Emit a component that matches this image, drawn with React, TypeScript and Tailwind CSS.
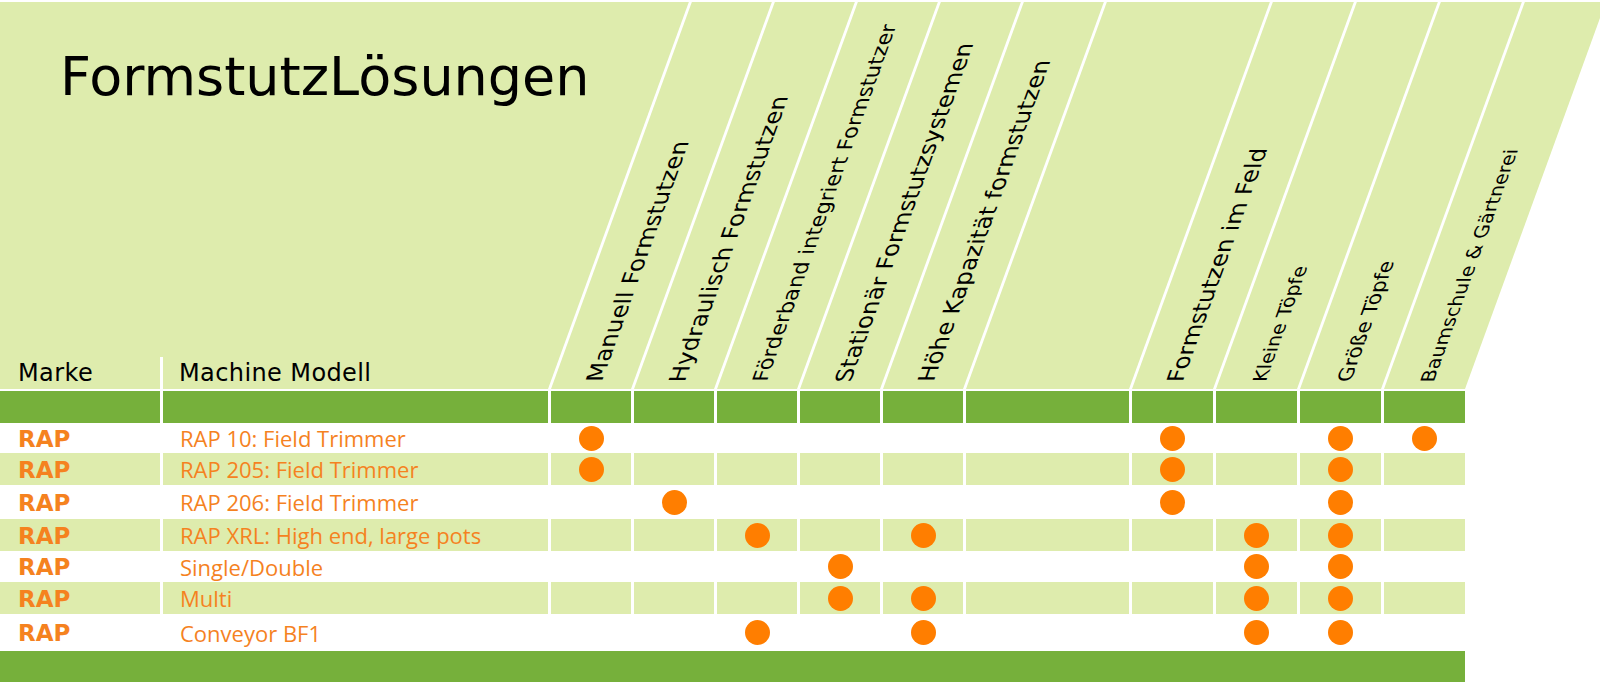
const LIGHT = 'bg-[#deecad]'

type Col = { label: string; size: string }

const columns: Col[] = [
  { label: 'Manuell Formstutzen', size: 'text-[23px]' },
  { label: 'Hydraulisch Formstutzen', size: 'text-[23px]' },
  { label: 'Förderband integriert Formstutzer', size: 'text-[21px]' },
  { label: 'Stationär Formstutzsystemen', size: 'text-[23px]' },
  { label: 'Höhe Kapazität formstutzen', size: 'text-[23px]' },
  { label: '', size: 'text-[23px]' },
  { label: 'Formstutzen im Feld', size: 'text-[23px]' },
  { label: 'Kleine Töpfe', size: 'text-[19px]' },
  { label: 'Größe Töpfe', size: 'text-[20px]' },
  { label: 'Baumschule & Gärtnerei', size: 'text-[19px]' },
]

const rows = [
  { model: 'RAP 10: Field Trimmer', dots: [0, 6, 8, 9], h: 'h-[30px]' },
  { model: 'RAP 205: Field Trimmer', dots: [0, 6, 8], h: 'h-[32px]' },
  { model: 'RAP 206: Field Trimmer', dots: [1, 6, 8], h: 'h-[34px]' },
  { model: 'RAP XRL: High end, large pots', dots: [2, 4, 7, 8], h: 'h-[32px]' },
  { model: 'Single/Double', dots: [3, 7, 8], h: 'h-[31px]' },
  { model: 'Multi', dots: [3, 4, 7, 8], h: 'h-[32px]' },
  { model: 'Conveyor BF1', dots: [2, 4, 7, 8], h: 'h-[37px]' },
]

const tableCols =
  'grid grid-cols-[160px_385px_80px_80px_80px_80px_80px_163px_81px_81px_81px_81px] gap-x-[3px]'

function Dot() {
  return <span className="block h-[25px] w-[25px] rounded-full bg-[#ff7e00]" />
}

export default function App() {
  return (
    <div className="h-[682px] w-[1600px] overflow-hidden bg-white [font-family:'DejaVu_Sans',sans-serif]">
      {/* Header with slanted column titles */}
      <div className={`mt-[2px] flex h-[387px] w-[1465px] ${LIGHT}`}>
        <div className="flex w-[548px] shrink-0 flex-col justify-between">
          <h1 className="pl-[60px] pt-[48px] text-[54px] leading-[54px] font-normal text-black">
            FormstutzLösungen
          </h1>
          <div className="flex h-[32px] text-[24px] leading-[24px] tracking-[0.4px] text-black">
            <div className="flex w-[160px] items-end pb-[4px] pl-[18px]">Marke</div>
            <div className="w-[3px] bg-white" />
            <div className="flex items-end pb-[4px] pl-[16px]">Machine Modell</div>
          </div>
        </div>
        <div className="grid h-full origin-bottom-left -skew-x-[20deg] grid-cols-[80px_80px_80px_80px_80px_163px_81px_81px_81px_81px] gap-x-[3px] bg-white pl-[3px]">
          {columns.map((c, i) => (
            <div key={i} className={`flex flex-col items-center justify-end pb-[7px] ${LIGHT}`}>
              {c.label && (
                <span
                  className={`rotate-180 whitespace-nowrap leading-none text-black [writing-mode:vertical-rl] ${c.size}`}
                >
                  {c.label}
                </span>
              )}
            </div>
          ))}
        </div>
      </div>

      <div className="h-[2px]" />

      {/* Column bar */}
      <div className={`${tableCols} h-[32px] w-[1465px]`}>
        {Array.from({ length: 12 }).map((_, i) => (
          <div key={i} className="bg-[#76b03b]" />
        ))}
      </div>

      {/* Rows */}
      {rows.map((r, ri) => {
        const cell = ri % 2 === 1 ? LIGHT : ''
        return (
          <div key={ri} className={`${tableCols} ${r.h} w-[1465px]`}>
            <div
              className={`flex items-center pl-[18px] pt-[2px] text-[23px] leading-none font-bold text-[#f5821f] ${cell}`}
            >
              RAP
            </div>
            <div
              className={`flex items-center pl-[17px] text-[22px] leading-none text-[#f5821f] [font-family:'Open_Sans',sans-serif] ${cell}`}
            >
              {r.model}
            </div>
            {columns.map((_, ci) => (
              <div key={ci} className={`flex items-center justify-center ${cell}`}>
                {r.dots.includes(ci) && <Dot />}
              </div>
            ))}
          </div>
        )
      })}

      {/* Footer bar */}
      <div className="h-[31px] w-[1465px] bg-[#76b03b]" />
    </div>
  )
}
